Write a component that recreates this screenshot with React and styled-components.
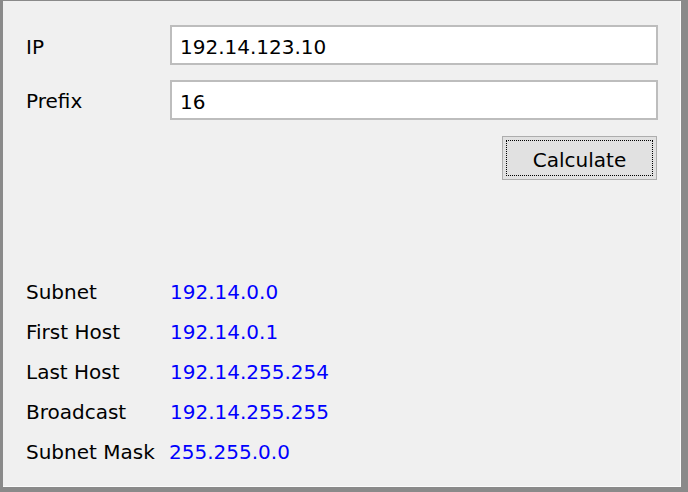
import React from "react";
import styled, { createGlobalStyle } from "styled-components";

const Global = createGlobalStyle`
  html, body { margin: 0; padding: 0; background: #8a8a8a; }
  body { font-family: "DejaVu Sans", Verdana, sans-serif; }
  * { box-sizing: border-box; }
`;

const Frame = styled.div`
  width: 688px;
  height: 492px;
  background: #8a8a8a;
  padding: 1px 7px 5px 3px;
  display: flex;
`;

const Panel = styled.div`
  flex: 1;
  background: #f0f0f0;
  border-right: 1px solid #fbfbfb;
  border-bottom: 1px solid #fbfbfb;
  padding: 24px 22px 0 23px;
  display: flex;
  flex-direction: column;
  font-size: 20px;
  color: #000;
`;

const FieldGrid = styled.div`
  display: grid;
  grid-template-columns: 144px 1fr;
  grid-auto-rows: 40px;
  row-gap: 15px;
`;

const Label = styled.div`
  height: 40px;
  font-size: 20px;
  line-height: 40px;
  padding-top: ${(p) => p.$dy || 0}px;
`;

const TextBox = styled.input`
  width: 100%;
  height: 40px;
  border: 2px solid #bdbdbd;
  background: #fff;
  font-family: "DejaVu Sans", Verdana, sans-serif;
  font-size: 20px;
  color: #000;
  padding: 4px 7px 0 8px;
  outline: none;
  margin: 0;
`;

const ButtonRow = styled.div`
  display: flex;
  justify-content: flex-end;
  margin-top: 16px;
  padding-right: 1px;
`;

const Button = styled.button`
  position: relative;
  width: 155px;
  height: 44px;
  border: 1px solid #adadad;
  background: #e1e1e1;
  font-family: "DejaVu Sans", Verdana, sans-serif;
  font-size: 20px;
  color: #000;
  padding: 3px 0 0 0;
  margin: 0;
  &::after {
    content: "";
    position: absolute;
    inset: 3px;
    border: 1px dotted #000;
  }
`;

const Results = styled.div`
  margin-top: 92px;
  display: grid;
  grid-template-columns: 144px 1fr;
  grid-auto-rows: 40px;
`;

const ResultLabel = styled.div`
  line-height: 40px;
  white-space: nowrap;
`;

const ResultValue = styled.div`
  line-height: 40px;
  color: #0000ff;
  margin-left: ${(p) => p.$shift || 0}px;
`;

const results = [
  ["Subnet", "192.14.0.0", 0],
  ["First Host", "192.14.0.1", 0],
  ["Last Host", "192.14.255.254", 0],
  ["Broadcast", "192.14.255.255", 0],
  ["Subnet Mask", "255.255.0.0", -1],
];

export default function App() {
  return (
    <>
      <Global />
      <Frame>
        <Panel>
          <FieldGrid>
            <Label $dy={2}>IP</Label>
            <TextBox defaultValue="192.14.123.10" />
            <Label $dy={1}>Prefix</Label>
            <TextBox defaultValue="16" />
          </FieldGrid>
          <ButtonRow>
            <Button>Calculate</Button>
          </ButtonRow>
          <Results>
            {results.map(([l, v, s]) => (
              <React.Fragment key={l}>
                <ResultLabel>{l}</ResultLabel>
                <ResultValue $shift={s}>{v}</ResultValue>
              </React.Fragment>
            ))}
          </Results>
        </Panel>
      </Frame>
    </>
  );
}
